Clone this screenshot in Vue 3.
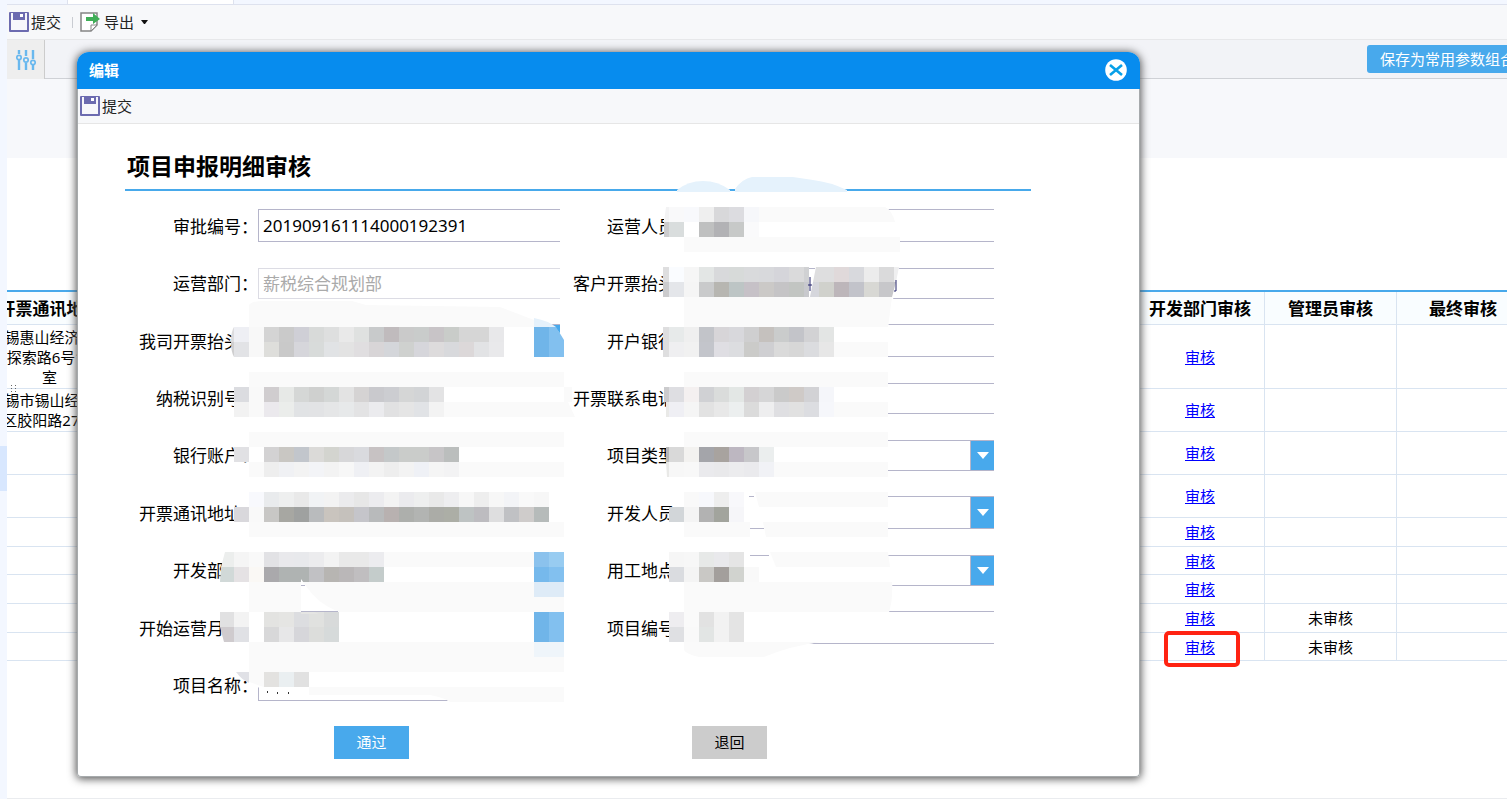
<script setup>
import { ref } from 'vue'

const rows = [
  { height: 'h64', address: ['锡惠山经济开', '探索路6号10', '室'], admin: '' },
  { height: 'h43', address: ['锡市锡山经济', '区胶阳路2711'], admin: '' },
  { height: 'h43', address: [], admin: '' },
  { height: 'h43', address: [], admin: '' },
  { height: 'h29', address: [], admin: '' },
  { height: 'h28', address: [], admin: '' },
  { height: 'h29', address: [], admin: '' },
  { height: 'h29', address: [], admin: '未审核' },
  { height: 'h28', address: [], admin: '未审核', marked: true }
]

const fields = ref([
  { id: 'approvalNo', label: '审批编号', value: '201909161114000192391', tall: true },
  { id: 'operator', label: '运营人员', value: '', tall: true },
  { id: 'department', label: '运营部门', value: '薪税综合规划部', disabled: true },
  { id: 'customerTitle', label: '客户开票抬头', value: '' },
  { id: 'companyTitle', label: '我司开票抬头', value: '', select: true, tall: true },
  { id: 'bank', label: '开户银行', value: '', tall: true },
  { id: 'taxNo', label: '纳税识别号', value: '' },
  { id: 'phone', label: '开票联系电话', value: '' },
  { id: 'account', label: '银行账户', value: '' },
  { id: 'projectType', label: '项目类型', value: '', select: true },
  { id: 'address', label: '开票通讯地址', value: '', tall: true },
  { id: 'developer', label: '开发人员', value: '', select: true, tall: true },
  { id: 'devDept', label: '开发部门', value: '', select: true },
  { id: 'workplace', label: '用工地点', value: '', select: true },
  { id: 'startMonth', label: '开始运营月份', value: '', select: true, tall: true },
  { id: 'projectNo', label: '项目编号', value: '', tall: true },
  { id: 'projectName', label: '项目名称', value: '' }
])

// Privacy mosaic: each band is [x, y, colours of successive 15px cells]
const bands = [
  [234, 327, 'eeeff4 f8f8f8 d4d4d4 cacaca cfcfd6 d8dad9 dedfdf e9e9e9 dfe1e0 c8cacb c0bbbd cacaca c9cccb c8c4c7 c9ccc9 d6d6d6 d6d6d6 e8e8ea'],
  [234, 342, 'e2e3e6 f8f8f8 dededb c9c9c9 d6d6db d8dbda e1e3e5 e3e3e3 e0dee0 d8d5d7 d4d6da cfd1cf d6d6db dddbdc d8d9dc dcd8d9 e2e3e5 e9e9eb'],
  [234, 387, 'dbdce0 f9f9f9 d0cdcf e7e9e7 d5d7d6 cfd0cf d4d7d6 e3e3e3 d5d3d3 c9c9cd cccdd1 d5d6d6 d2d4d6 e3e3e4'],
  [234, 402, 'f2f2f2 f9f9f9 ebe9ed ebedeb e1e3e5 e2e3e5 e5e6e7 e7e9ea e3e3e4 ebebee e1e1e2 e5e5e5 e1e3e6 f3f3f3'],
  [234, 447, 'e1e1e4 ffffff d3d2d3 c9c7c3 c2c6cc dbdad8 d3d4cf d7d7d9 d9dade c7c2c3 c4c8c9 caccca caccca c7c5c7 bbbebd'],
  [264, 462, 'eeeeee f0f1f4 f3f3f3 f3f4f7 f3f3f3 f7f7f7 eff0f4 f3f3f3 eeeeee f3f3f3 eff1f6 f5f5f5 f3f3f4'],
  [249, 492, 'f8f9fd e9ebed eeefef e9e9e9 f1f3f5 f3f3f3 ebebed e7e7e7 ececef f3f3f3 ebebee eeefef e9e9e9 eeeef0 f7f7f7 eeeeee f7f7f7 f3f4f7 f9f9f9 f7f7f7'],
  [234, 507, 'd9d8dc f9f9f9 c8c7c5 a7a7a2 9fa1a0 b9bbbd c9c4be c5c1bc c5c5ca b8babb b8b1b0 adafac b2b4b2 abaca7 acaea6 bec3c3 bdbcc0 dededf c0c1c4 cfcccb b6bbba'],
  [234, 552, 'f5f5f5 f9f9f9 e2e2e5 e9e9ec e8e9ec ececee f3f3f3 e9e9e9 e9e9e9 ececef'],
  [234, 567, 'e5e2e4 faf8f5 aaa9ac afb3b2 afb3b2 c1c1c4 b7b5b2 bab7b8 c0bec0 c4cccb'],
  [234, 612, 'f3f3f3 ffffff e3e3e1 e5e5e3 dcdde0 e0e1df d8dada'],
  [234, 627, 'e0e1e5 ffffff d8d8d9 e7e7e8 d6d6da dcdddb d6dada'],
  [264, 672, 'e3e2e0 eaeff1 e1e1e1'],
  [669, 207, 'f9f9fa f8f9fc efefef d8d8da dcdce0 f6f7fa'],
  [669, 222, 'd9dddd ffffff bfc0c0 b2b2b5 c7c9c8 fafafb'],
  [669, 267, 'fafcff f6f6f6 e3e6e5 d8d9db d7dad9 d9dadc d8d9dc d5d5da dadadb d0d1d3'],
  [669, 282, 'e4e6ea f5f5f5 c9cacb b7b6b1 bdc5c5 c6c1c7 cbc9c7 c5c4c6 c2c5c2 c8c9cd'],
  [669, 327, 'e7eaea efefef c2c4c9 d7d5d8 d8d8dc cfcfd0 c5c1be cacccc c3c4c9 d2d2d4 e3e5e4'],
  [669, 342, 'efeff1 f1f1f1 c3c5cb dfdee3 dcdde0 cbcbc9 cfcfd2 dadada d7d7d7 dbdcdf e7e7e7'],
  [669, 387, 'dedee2 f4f0f0 d0d1d4 dadcdb e3e7e5 d3d0d2 d6d6d7 cacaca cfcac7 d2d2d5 f5f6fa'],
  [669, 402, 'efeff4 f5f5f5 e2e2e2 e8e8e8 ecefef dbdbdb eeeeef dfdfe2 e1e1e1 dcdde1 f6f7fb'],
  [669, 447, 'd9d9d9 f3f2f0 a4a5aa a8a39f bdb7c1 c7c7ca ebeeee'],
  [669, 462, 'f7f7f7 f8f8f8 eaeaed e9e9eb ececee eaeaed f1f2f6'],
  [684, 492, 'f9f9f9 f7f8fc eeeeee f8f8fb'],
  [669, 507, 'd2d6d9 f4f4f4 b2b2b2 a2a49d f6f6f9'],
  [669, 552, 'f6f6f6 f7f7f7 e7e9e8 e9e9ec e5e5e5'],
  [669, 567, 'dadce0 f4f4f4 c9c8c5 a39f9c d1d3cf f9f9f9'],
  [669, 612, 'eeedf0 fafafa e2e2e2 f2f2f2 e4e4e4'],
  [669, 627, 'dfe0e3 f9f9f9 e2e5e4 f2f2f2 e4e4e4']
]
const cells = bands.flatMap(([x, y, list]) =>
  list.split(' ').map((c, i) => ({ x: x + i * 15, y, fill: '#' + c }))
)

const washes = [
  'M249 305 Q252 301 264 301 H352 L366 305 L500 307 L534 320 V327 H249 Z',
  'M249 372 H564 V387 H249 Z', 'M444 402 H568 L575 417 H249 V402 Z', 'M564 387 H572 V402 H564 Z',
  'M249 432 H564 V447 H249 Z', 'M249 462 H564 V477 H249 Z',
  'M249 522 H564 V537 H249 Z', 'M384 552 H534 V567 H384 Z',
  'M249 582 H534 V612 H249 Z', 'M534 597 H564 V612 H534 Z', 'M249 642 H564 V672 H249 Z',
  'M309 687 H564 V702 H450 Q445 698 430 695 H309 Z', 'M249 612 H264 V687 L249 682 Z',
  'M759 207 H885 Q892 210 895 222 H759 Z', 'M684 237 H900 V252 H684 Z',
  'M684 297 H892 L888 327 H684 Z', 'M834 342 H888 V357 H834 Z', 'M684 372 H888 V387 H684 Z',
  'M834 402 H888 V417 H834 Z', 'M684 432 H888 V447 H684 Z', 'M774 462 H888 V477 H774 Z',
  'M755 492 H888 V507 H759 Z', 'M684 522 H750 V537 H684 Z', 'M763 522 H888 V537 H766 Z',
  'M770 552 H888 L890 567 H776 Z', 'M684 582 H892 Q893 600 889 612 H684 Z',
  'M684 642 H820 Q790 646 764 657 H699 Q686 654 684 650 Z'
]
</script>

<template>
  <div class="page">
    <aside class="rail"><span class="rail-mark"></span></aside>
    <main class="workspace">
      <div class="tabs"><span class="tab"></span></div>
      <div class="toolbar">
        <button class="tool" type="button">
          <svg width="20" height="20" viewBox="0 0 20 20">
            <path d="M1 0H19Q20 0 20 1V19Q20 20 19 20H1Q0 20 0 19V1Q0 0 1 0Z" fill="#6c6bb0" />
            <rect x="2" y="8" width="16" height="10" fill="#f7f7fb" /><rect x="2" y="1" width="2" height="8" fill="#f7f7fb" /><rect x="16" y="1" width="2" height="8" fill="#f7f7fb" />
            <rect x="11" y="2" width="3" height="3" fill="#fff" />
          </svg>提交
        </button>
        <i class="divider"></i>
        <button class="tool export" type="button">
          <svg width="20" height="20" viewBox="0 0 20 20">
            <path d="M1 1H17V13L11 19H1Z" fill="#fff" stroke="#858585" stroke-width="1.5" />
            <path d="M11 19V13H17Z" fill="#fff" stroke="#858585" />
            <path d="M6 5H13V1L20 7L13 12V9H6Z" fill="#3fae57" />
          </svg>导出
          <svg class="caret" width="8" height="5" viewBox="0 0 8 5"><path d="M0 0H7L4 4H3Z" fill="#111" /></svg>
        </button>
      </div>
      <div class="params">
        <button class="sliders" type="button" aria-label="参数">
          <svg width="20" height="20" viewBox="0 0 20 20" fill="none" stroke="#69b8ee">
            <path d="M3 0V4M3 10V20M10 0V6M10 13V20M17 0V9M17 15V20" stroke-width="2.4" />
            <circle cx="3" cy="7.5" r="2.2" stroke-width="1.7" /><circle cx="10" cy="10" r="2.2" stroke-width="1.7" /><circle cx="17" cy="12.5" r="2.2" stroke-width="1.7" />
          </svg>
        </button>
        <button class="save" type="button">保存为常用参数组合</button>
      </div>
      <div class="filter"></div>
      <section class="report">
        <table>
          <colgroup><col class="c-address" /><col /><col class="c-dev" /><col class="c-admin" /><col class="c-final" /></colgroup>
          <thead>
            <tr><th>开票通讯地址</th><th></th><th>开发部门审核</th><th>管理员审核</th><th>最终审核</th></tr>
          </thead>
          <tbody>
            <tr v-for="(row, i) in rows" :key="i" :class="row.height">
              <td><div v-for="line in row.address" :key="line">{{ line }}</div></td>
              <td></td>
              <td class="audit"><a href="#">审核</a><span v-if="row.marked" class="marker"></span></td>
              <td>{{ row.admin }}</td>
              <td></td>
            </tr>
          </tbody>
        </table>
        <svg class="grip" width="6" height="8" viewBox="0 0 6 8" fill="#666"><path d="M0 0H1V1H0ZM4 0H5V1H4ZM0 3H1V4H0ZM4 3H5V4H4ZM0 6H1V7H0ZM4 6H5V7H4Z" /></svg>
      </section>
    </main>

    <section class="dialog" role="dialog" aria-labelledby="dialog-title">
      <header class="dialog-head">
        <span id="dialog-title">编辑</span>
        <button class="close" type="button" aria-label="关闭">
          <svg width="22" height="22" viewBox="0 0 22 22"><circle cx="11" cy="11" r="10.8" fill="#fff" /><path d="M5 6L17 16M17 6L5 16" stroke="#08a0e8" stroke-width="2.6" /></svg>
        </button>
      </header>
      <div class="dialog-body">
        <div class="dialog-tools">
          <button class="tool" type="button">
            <svg width="20" height="20" viewBox="0 0 20 20">
              <path d="M1 0H19Q20 0 20 1V19Q20 20 19 20H1Q0 20 0 19V1Q0 0 1 0Z" fill="#6c6bb0" />
              <rect x="2" y="8" width="16" height="10" fill="#f7f7fb" /><rect x="2" y="1" width="2" height="8" fill="#f7f7fb" /><rect x="16" y="1" width="2" height="8" fill="#f7f7fb" />
              <rect x="11" y="2" width="3" height="3" fill="#fff" />
            </svg>提交
          </button>
        </div>
        <form class="sheet" @submit.prevent>
          <h2>项目申报明细审核</h2>
          <div class="fields">
            <template v-for="f in fields" :key="f.id">
              <label :for="f.id">{{ f.label }}：</label>
              <div class="control" :class="{ tall: f.tall, off: f.disabled }">
                <template v-if="f.select">
                  <select :id="f.id" v-model="f.value"><option value=""></option></select>
                  <span class="arrow"><svg width="12" height="7" viewBox="0 0 12 7"><path d="M0 0H12L6 7Z" fill="#fff" /></svg></span>
                </template>
                <input v-else :id="f.id" v-model="f.value" type="text" :disabled="f.disabled" />
              </div>
            </template>
          </div>
          <div class="actions">
            <button class="pass" type="button">通过</button>
            <button class="reject" type="button">退回</button>
          </div>
          <svg class="mosaic" width="906" height="652" viewBox="125 124 906 652" aria-hidden="true">
            <g fill="#e5f2fc">
              <path d="M677 192V190Q688 181 703 181Q718 181 730 190V192Z" />
              <path d="M735 192V189Q742 179 752 177H793L813 180Q830 182 847 190V192Z" />
            </g>
            <g fill="#fff">
              <path d="M249 301H366L500 307L534 318Q556 323 564 340V702H450Q445 698 430 695H300Q262 692 249 683Z" />
              <path d="M664 207H885Q892 210 895 222L900 237V252H684V237H664Z" />
              <path d="M664 267H899L888 327V582H892Q893 600 889 612H888V642H820Q790 646 764 657H699L684 650V300H664Z" />
            </g>
            <path v-for="d in washes" :key="d" :d="d" fill="#fafafa" />
            <g shape-rendering="crispEdges">
              <rect v-for="c in cells" :key="c.x + '-' + c.y" :x="c.x" :y="c.y" width="15" height="15" :fill="c.fill" />
            </g>
            <path d="M234 327Q231 331 231 342H234Z" fill="#dcdcde" />
            <path d="M231 342Q231 352 234 357V342Z" fill="#cfcfd0" />
            <path d="M225 552H234V567H221Z" fill="#eceeed" /><path d="M221 567H234V582H220Z" fill="#d1d9d8" />
            <path d="M220 612H234V627H220Z" fill="#e1e1e2" /><path d="M220 627H234V642H224Z" fill="#cfcbce" />
            <path d="M236 672H249V683Q242 680 236 672Z" fill="#e0e1e6" />
            <path d="M666 207H669V222H664Z" fill="#f3f3f4" /><path d="M664 222H669V237H664Z" fill="#cbcbcd" />
            <path d="M663 267H669V282H663ZM663 327H669V342H663ZM663 342H669V357H663Z" fill="#dededf" />
            <path d="M663 282H669V297H663ZM664 387H669V402H664Z" fill="#cbcbcd" />
            <path d="M666 402H669V417H666ZM666 462H669V477H667Z" fill="#e9e9e7" /><path d="M666 447H669V462H666Z" fill="#b7b7b8" />
            <path d="M816 267H834V282H812Z" fill="#dededf" /><path d="M834 267H849V282H834Z" fill="#e0d9da" />
            <path d="M849 267H864V282H849Z" fill="#d8d9dd" /><path d="M864 267H879V282H864Z" fill="#ececec" />
            <path d="M879 267H894V282H879Z" fill="#dadadb" /><path d="M894 267H899L896 282H894Z" fill="#efeff0" />
            <path d="M812 282H819V297H810Z" fill="#d5d6dc" /><path d="M819 282H834V297H819Z" fill="#d0d1cc" />
            <path d="M834 282H849V297H834Z" fill="#bdb6ba" /><path d="M849 282H864V297H849Z" fill="#c2c3ca" />
            <path d="M864 282H879V297H864Z" fill="#d8d8d4" /><path d="M879 282H896L892 297H879Z" fill="#c7c7ca" />
            <path d="M809 267H816L810 297H809Z" fill="#fff" />
            <path d="M534 318Q549 321 556 327H534Z" fill="#e5f1fb" />
            <g fill="#70b5e9"><path d="M534 327H549V357H534ZM534 612H549V642H534Z" /><path d="M534 567H549V582H534Z" fill="#76b9ec" /><path d="M534 552H549V567H534Z" fill="#8bc2ed" /></g>
            <g fill="#82c0ef"><path d="M549 327H556L564 340V357H549ZM549 612H564V642H549ZM549 567H564V582H549Z" /><path d="M549 552H564V567H549Z" fill="#98ccf1" /></g>
            <path d="M534 582H564V597H534Z" fill="#deebf7" /><path d="M534 642H564V657H534Z" fill="#eff5fa" />
            <path d="M301 579L306 586Q318 604 339 612H301Z" fill="#fff" />
            <path d="M301 612H314L319 614H301Z" fill="#e5e5e3" />
            <g fill="#b5b5ca" shape-rendering="crispEdges">
              <path d="M301 585H305V586H301ZM301 611H338V612H301ZM809 268H815V269H809ZM749 496H754V497H749ZM750 528H764V529H750ZM750 555H769V556H750Z" />
            </g>
            <path d="M810 277V291M808 285H812M894 291H896V280" stroke="#25256a" fill="none" />
            <path d="M267 691H268V693H267ZM277 692H278V694H277ZM288 692H289V694H288Z" fill="#333" />
          </svg>
        </form>
      </div>
    </section>
  </div>
</template>

<style>
body { margin: 0; }
</style>

<style scoped>
.page {
  position: relative;
  display: flex;
  min-height: 100vh;
  overflow: hidden;
  background: #fff;
  color: #000;
  font: 15px/20px "Noto Sans", "Noto Sans CJK SC", sans-serif;
}
button, input, select { font: inherit; color: inherit; margin: 0; padding: 0; border: 0; background: none; border-radius: 0; }
button { cursor: pointer; }
svg { display: block; flex: none; }
.rail { flex: none; width: 7px; background: #f3f7ff; padding-top: 446px; box-sizing: border-box; }
.rail-mark { display: block; height: 45px; background: #d8e7fe; }
.workspace { flex: 1; min-width: 0; display: flex; flex-direction: column; border-bottom: 1px solid #eaecef; overflow: hidden; }
.tabs { height: 4px; background: #f3f7ff; border-bottom: 1px solid #dee2ee; }
.tab { display: block; width: 165px; height: 4px; margin-left: 60px; background: #fff; border: solid #dee2ee; border-width: 0 1px; }
.toolbar { display: flex; align-items: center; height: 34px; padding-left: 2px; background: #f7f8fa; border-bottom: 1px solid #e7e8ea; }
.tool { display: flex; align-items: center; gap: 2px; color: #222; }
.divider { width: 1px; height: 11px; margin: 0 7px 0 11px; background: #c9ccd2; }
.export { gap: 4px; }
.caret { margin-left: 3px; }
.params { display: flex; justify-content: space-between; align-items: center; height: 38px; background: #f2f3f7; border-bottom: 1px solid #cfd1d6; }
.sliders { display: flex; align-items: center; justify-content: center; width: 38px; height: 39px; background: #eee; border-right: 1px solid #ccc; box-sizing: border-box; margin-bottom: -1px; }
.save { flex: none; height: 28px; margin-right: -21px; padding: 0 13px; border-radius: 3px; background: #48a9ec; color: #fff; white-space: nowrap; }
.filter { height: 79px; background: #f7f8fb; }
.report { position: relative; flex: 1; padding-top: 132px; }
table { width: calc(100% + 50px); margin-left: -27px; table-layout: fixed; border-collapse: separate; border-spacing: 0; border-top: 2px solid #48a9eb; }
.c-address { width: 140px; }
.c-dev { width: 129px; }
.c-admin { width: 132px; }
.c-final { width: 133px; }
th, td { padding: 0; text-align: center; border: solid #d9e4f1; border-width: 0 1px 1px 0; box-sizing: border-box; white-space: nowrap; }
th { height: 33px; padding-top: 2px; background: #f9fdff; font-size: 17px; }
.h64 td { height: 64px; }
.h43 td { height: 43px; }
.h29 td { height: 29px; }
.h28 td { height: 28px; }
a { color: #00f; text-decoration: underline; }
.audit { position: relative; }
.marker { position: absolute; left: 28px; top: -2px; width: 68px; height: 28px; border: 4px solid #ff2312; border-radius: 5px; }
.grip { position: absolute; left: 4px; top: 227px; }

.dialog { position: absolute; left: 77px; right: 367px; top: 52px; border-radius: 12px 12px 4px 4px; box-shadow: 0 1px 8px 1px #555; }
.dialog-head { display: flex; align-items: center; justify-content: space-between; height: 37px; padding: 0 13px 0 12px; border-radius: 12px 12px 0 0; background: #078cee; color: #fff; font-weight: bold; }
.dialog-head span, .dialog-head .close { display: block; margin-bottom: 2px; }
.dialog-body { background: #fff; border: solid #a6aaac; border-width: 0 1px 1px; border-radius: 0 0 4px 4px; }
.dialog-tools { display: flex; align-items: center; height: 34px; padding-left: 2px; background: #f7f8fa; border-bottom: 1px solid #e6e6e6; }
.sheet { position: relative; max-width: 906px; margin-left: 47px; padding: 26px 0 17px; font-size: 17px; }
h2 { margin: 0; padding: 0 2px 7px; border-bottom: 2px solid #48a9eb; font-size: 23px; line-height: 32px; }
.fields { display: grid; grid-template-columns: 133px 302px 132px 302px; grid-template-rows: repeat(9, 1fr); align-items: center; height: 517px; margin-top: 6px; }
label { justify-self: end; padding-top: 2px; white-space: nowrap; }
.control { display: flex; height: 31px; box-sizing: border-box; border: 1px solid #b5b5ca; border-right: 0; background: #fff; }
.control.tall { height: 33px; }
.control.off { border-color: #dcdce4; }
.control input, .control select { flex: 1; min-width: 0; padding: 0 4px; appearance: none; outline: none; }
.control input:disabled { padding-top: 2px; color: #aaa; }
.arrow { display: flex; align-items: center; justify-content: center; width: 23px; border-left: 1px solid #b5b5ca; background: #48a9ec; pointer-events: none; }
.actions { display: flex; gap: 283px; margin-top: 12px; padding-left: 209px; font-size: 15px; }
.actions button { width: 75px; height: 33px; padding-bottom: 2px; }
.actions .pass { background: #48a9ec; color: #fff; }
.actions .reject { background: #ccc; }
.mosaic { position: absolute; left: 0; top: 0; pointer-events: none; }
</style>
